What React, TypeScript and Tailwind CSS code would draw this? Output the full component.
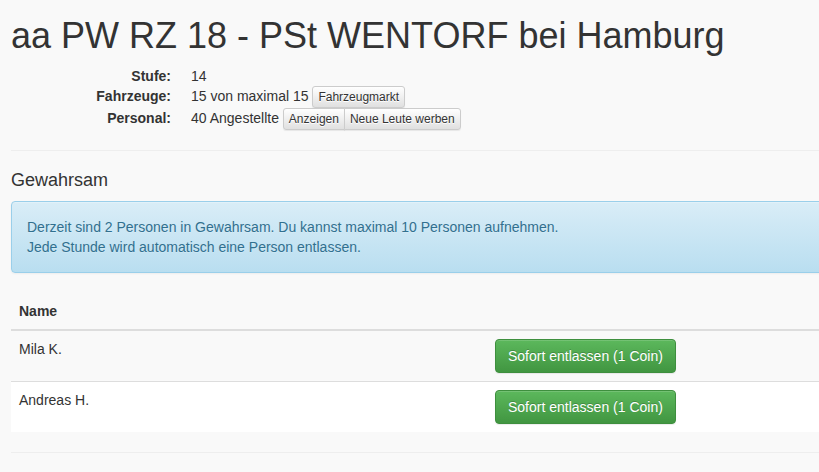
import React from "react";

const prisoners = [
  { name: "Mila K." },
  { name: "Andreas H." },
];

function XsButton({
  children,
  className = "",
}: {
  children: React.ReactNode;
  className?: string;
}) {
  return (
    <button
      className={`inline-block align-middle border border-[#ccc] bg-gradient-to-b from-white to-[#e0e0e0] px-[5px] py-px text-[12px] leading-[18px] text-[#333] [text-shadow:0_1px_0_#fff] shadow-[inset_0_1px_0_rgba(255,255,255,0.15),0_1px_1px_rgba(0,0,0,0.075)] ${className}`}
    >
      {children}
    </button>
  );
}

export default function App() {
  return (
    <div className="min-h-screen overflow-hidden bg-[#f9f9f9] font-['Liberation_Sans',Arial,sans-serif] text-[14px] leading-[20px] text-[#333]">
      <div className="w-[1140px] pl-[11px] pt-[16px]">
        <h1 className="mb-[10px] text-[36px] font-normal leading-[1.1]">
          aa PW RZ 18 - PSt WENTORF bei Hamburg
        </h1>

        <dl className="mb-[20px]">
          <div className="flex items-start">
            <dt className="w-[160px] text-right font-bold">Stufe:</dt>
            <dd className="ml-[20px]">14</dd>
          </div>
          <div className="flex items-start">
            <dt className="w-[160px] text-right font-bold">Fahrzeuge:</dt>
            <dd className="ml-[20px]">
              15 von maximal 15 <XsButton className="rounded-[3px]">Fahrzeugmarkt</XsButton>
            </dd>
          </div>
          <div className="flex items-start">
            <dt className="w-[160px] text-right font-bold">Personal:</dt>
            <dd className="ml-[20px]">
              40 Angestellte{" "}
              <span className="inline-block align-middle">
                <XsButton className="rounded-l-[3px]">Anzeigen</XsButton>
                <XsButton className="-ml-px rounded-r-[3px]">Neue Leute werben</XsButton>
              </span>
            </dd>
          </div>
        </dl>

        <hr className="my-[20px] border-0 border-t border-[#eee]" />

        <h4 className="mb-[10px] mt-[20px] text-[18px] font-medium leading-[1.1]">Gewahrsam</h4>

        <div className="mb-[20px] rounded-[4px] border border-[#9acfea] bg-gradient-to-b from-[#d9edf7] to-[#b9def0] p-[15px] text-[#31708f] [text-shadow:0_1px_0_rgba(255,255,255,0.2)] shadow-[inset_0_1px_0_rgba(255,255,255,0.25),0_1px_2px_rgba(0,0,0,0.05)]">
          Derzeit sind 2 Personen in Gewahrsam. Du kannst maximal 10 Personen aufnehmen.
          <br />
          Jede Stunde wird automatisch eine Person entlassen.
        </div>

        <table className="mb-[20px] w-full table-fixed border-collapse">
          <thead>
            <tr>
              <th className="w-[476px] border-b-2 border-[#ddd] p-[8px] text-left align-bottom font-bold">
                Name
              </th>
              <th className="border-b-2 border-[#ddd] p-[8px] text-left align-bottom"></th>
            </tr>
          </thead>
          <tbody>
            {prisoners.map((p, i) => (
              <tr key={p.name} className={i % 2 === 0 ? "bg-[#f9f9f9]" : "bg-white"}>
                <td className="border-t border-[#ddd] p-[8px] align-top">{p.name}</td>
                <td className="border-t border-[#ddd] p-[8px] align-top">
                  <button className="inline-block rounded-[4px] border border-[#3e8f3e] bg-gradient-to-b from-[#5cb85c] to-[#419641] px-[12px] py-[6px] text-[14px] leading-[20px] text-white [text-shadow:0_-1px_0_rgba(0,0,0,0.2)] shadow-[inset_0_1px_0_rgba(255,255,255,0.15),0_1px_1px_rgba(0,0,0,0.075)]">
                    Sofort entlassen (1 Coin)
                  </button>
                </td>
              </tr>
            ))}
          </tbody>
        </table>

        <hr className="my-[20px] border-0 border-t border-[#eee]" />
      </div>
    </div>
  );
}
